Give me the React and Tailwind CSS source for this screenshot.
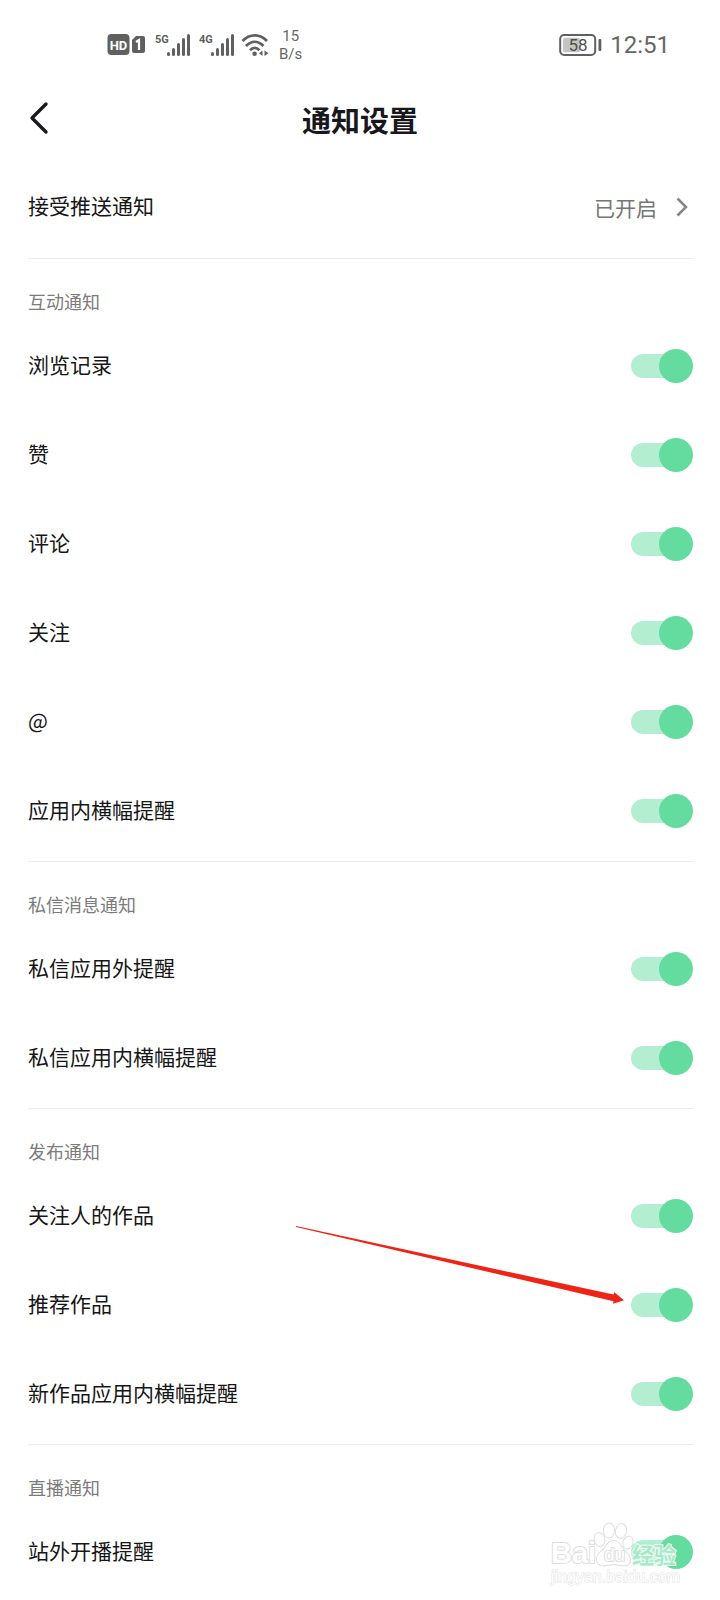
import { useState } from 'react';

const SECTIONS = [
  {
    title: '互动通知',
    items: [
      { id: 'history', label: '浏览记录' },
      { id: 'like', label: '赞' },
      { id: 'comment', label: '评论' },
      { id: 'follow', label: '关注' },
      { id: 'mention', label: '@' },
      { id: 'banner', label: '应用内横幅提醒' },
    ],
  },
  {
    title: '私信消息通知',
    items: [
      { id: 'dm-push', label: '私信应用外提醒' },
      { id: 'dm-banner', label: '私信应用内横幅提醒' },
    ],
  },
  {
    title: '发布通知',
    items: [
      { id: 'following-works', label: '关注人的作品' },
      { id: 'recommended', label: '推荐作品', pointer: true },
      { id: 'works-banner', label: '新作品应用内横幅提醒' },
    ],
  },
  {
    title: '直播通知',
    items: [{ id: 'live', label: '站外开播提醒', watermark: true }],
  },
];

function SignalBars({ label }) {
  return (
    <svg className="w-9 h-6" viewBox="0 0 36 24" fill="#606060">
      <text x="0" y="10" fontSize="11" fontWeight="700" fontFamily="Roboto, sans-serif">{label}</text>
      <rect x="12" y="19" width="3" height="4" rx="1.5" />
      <rect x="17" y="15" width="3" height="8" rx="1.5" />
      <rect x="22" y="10" width="3" height="13" rx="1.5" />
      <rect x="27" y="5" width="3" height="18" rx="1.5" />
      <rect x="32" y="1" width="3" height="22" rx="1.5" />
    </svg>
  );
}

function StatusBar() {
  return (
    <div className="h-[74px] pt-4 pl-[107px] pr-[50px] flex items-center justify-between text-[#666666] font-[Roboto,sans-serif]">
      <div className="flex items-center">
        <svg className="w-[38px] h-6 mr-2.5" viewBox="0 0 38 24">
          <rect x="0.5" y="1" width="22" height="21" rx="4" fill="#606060" />
          <text x="11.5" y="16.5" fontSize="13" fontWeight="700" textAnchor="middle" fill="#fff" fontFamily="Roboto, sans-serif">HD</text>
          <path d="M29 3H36a2 2 0 0 1 2 2v13a2 2 0 0 1-2 2h-9a2 2 0 0 1-2-2V7z" fill="#606060" />
          <path d="M29 9l3-2v10" fill="none" stroke="#fff" strokeWidth="2.2" />
        </svg>
        <SignalBars label="5G" />
        <span className="w-2" />
        <SignalBars label="4G" />
        <svg className="w-7 h-6 ml-1.5 mr-2.5" viewBox="0 0 28 24" fill="none" stroke="#606060" strokeWidth="2.8">
          <path d="M1.5 8C8.500 0.5 19 0.5 26 8" />
          <path d="M5 13C10.500 7.5 17 7.5 22.500 13" />
          <path d="M9 17.2C12 14.2 15.5 14.2 18.500 17.2" />
          <circle cx="13.6" cy="20.8" r="2.3" fill="#606060" stroke="none" />
          <path d="M21.500 17.5v5.500l-3.500-2.8zM23.500 17.5V23l4-2.8z" fill="#606060" stroke="none" />
        </svg>
        <div className="text-[15px] leading-[18px] text-center">
          <div>15</div>
          <div>B/s</div>
        </div>
      </div>

      <div className="flex items-center gap-2">
        <svg className="w-[43px] h-6" viewBox="0 0 43 24">
          <rect x="1.2" y="2" width="35" height="20" rx="4" fill="none" stroke="#606060" strokeWidth="2" />
          <rect x="4" y="4.8" width="17" height="14.4" rx="2" fill="#c4c4c4" />
          <text x="19" y="18" fontSize="17" textAnchor="middle" fill="#505050" fontFamily="Roboto, sans-serif">58</text>
          <rect x="39.500" y="6" width="2.8" height="12" rx="1" fill="#606060" />
        </svg>
        <span className="text-[24px] leading-6">12:51</span>
      </div>
    </div>
  );
}

function Toggle({ id, checked, onChange }) {
  return (
    <input
      id={id}
      type="checkbox"
      role="switch"
      checked={checked}
      onChange={onChange}
      className="appearance-none grid items-center shrink-0 w-[62px] h-[34px] cursor-pointer before:content-[''] before:[grid-area:1/1] before:w-13 before:h-6 before:rounded-full before:bg-gray-200 after:content-[''] after:[grid-area:1/1] after:size-[34px] after:rounded-full after:bg-gray-400 checked:before:bg-[#b3eed1] checked:after:bg-[#64db9f] checked:after:justify-self-end"
    />
  );
}

// Red pointer leading to a switch
function Pointer() {
  return (
    <svg className="absolute right-[69px] -top-[34px] w-[328px] h-20 pointer-events-none" viewBox="0 0 328 80">
      <path d="M0 0L317.5 68.6L318.3 66.2L328 74.3L317 77.8L317.5 75.2L0 0.9z" fill="#ee2416" />
    </svg>
  );
}

function Watermark() {
  return (
    <svg
      className="absolute right-2.5 top-1.5 w-[134px] h-[76px] pointer-events-none"
      viewBox="0 0 134 76"
      fill="#fff"
      stroke="#dedede"
      strokeWidth="2"
      strokeLinejoin="round"
      paintOrder="stroke"
      fontFamily="'Liberation Sans', sans-serif"
    >
      <text x="2" y="50" fontSize="29" fontWeight="700">Bai</text>
      <ellipse cx="50.500" cy="26.500" rx="4.8" ry="6.5" transform="rotate(-12 50.5 26.5)" />
      <ellipse cx="60" cy="17.500" rx="5" ry="7" />
      <ellipse cx="72" cy="18" rx="5" ry="7" transform="rotate(12 72 18)" />
      <ellipse cx="79" cy="29.500" rx="4.5" ry="6" transform="rotate(20 79 29.5)" />
      <path d="M65 28c-5 0-7 4-10 8-3 3-8 6-7 11 1 6 6 6 10 5 4-1 10-1 14 0 5 1 9 0 9-5 0-5-4-8-7-11-3-4-4-8-9-8z" />
      <text x="55" y="48" fontSize="19">du</text>
      <text x="83" y="50" fontSize="22" fontWeight="700" fill="#a8e9c9" stroke="#f1fbf6" fontFamily="'Noto Sans CJK SC', sans-serif">经验</text>
      <text x="2" y="69" fontSize="16" strokeWidth="1" stroke="#e0e0e0">jingyan.baidu.com</text>
    </svg>
  );
}

function SettingRow({ item, checked, onToggle }) {
  return (
    <li className="relative h-[89px] flex items-center justify-between">
      <label htmlFor={item.id} className="pb-1 text-[21px] leading-8 text-[#161616]">
        {item.label}
      </label>
      <Toggle id={item.id} checked={checked} onChange={() => onToggle(item.id)} />
      {item.pointer && <Pointer />}
      {item.watermark && <Watermark />}
    </li>
  );
}

export default function App() {
  const [off, setOff] = useState({});

  const toggle = id => setOff(prev => ({ ...prev, [id]: !prev[id] }));

  return (
    <div className="bg-white font-['Noto_Sans_CJK_SC',sans-serif] text-[#161616]">
      <StatusBar />

      {/* Title bar */}
      <header className="h-22 px-7 grid grid-cols-[1fr_auto_1fr] items-center">
        <button type="button" aria-label="返回" className="justify-self-start">
          <svg className="w-6 h-9" viewBox="0 0 24 36" fill="none" stroke="#1b1b1f" strokeWidth="3.4" strokeLinecap="round" strokeLinejoin="round">
            <path d="M18 4L4 18L18 32" />
          </svg>
        </button>
        <h1 className="pt-0.5 text-[29px] leading-10 font-bold text-[#17171c]">通知设置</h1>
      </header>

      <main className="pl-7 pr-[27px]">
        {/* Push permission */}
        <div className="pb-[7px]">
          <a href="#push" className="h-[89px] flex items-center justify-between">
            <span className="pb-1 text-[21px] leading-8">接受推送通知</span>
            <span className="flex items-center gap-4 text-[21px] leading-8 text-[#757575]">
              已开启
              <svg className="w-5 h-6" viewBox="0 0 20 24" fill="none" stroke="#858585" strokeWidth="2.5">
                <path d="M4.500 3.500L13 12L4.500 20.500" />
              </svg>
            </span>
          </a>
        </div>

        {SECTIONS.map(section => (
          <section key={section.title} className="border-t border-[#ececec] pt-7 pb-1.5 last:pb-0">
            <h2 className="mb-1.5 text-[18px] leading-7 text-[#7c7c7c]">{section.title}</h2>
            <ul>
              {section.items.map(item => (
                <SettingRow key={item.id} item={item} checked={!off[item.id]} onToggle={toggle} />
              ))}
            </ul>
          </section>
        ))}
      </main>
    </div>
  );
}
